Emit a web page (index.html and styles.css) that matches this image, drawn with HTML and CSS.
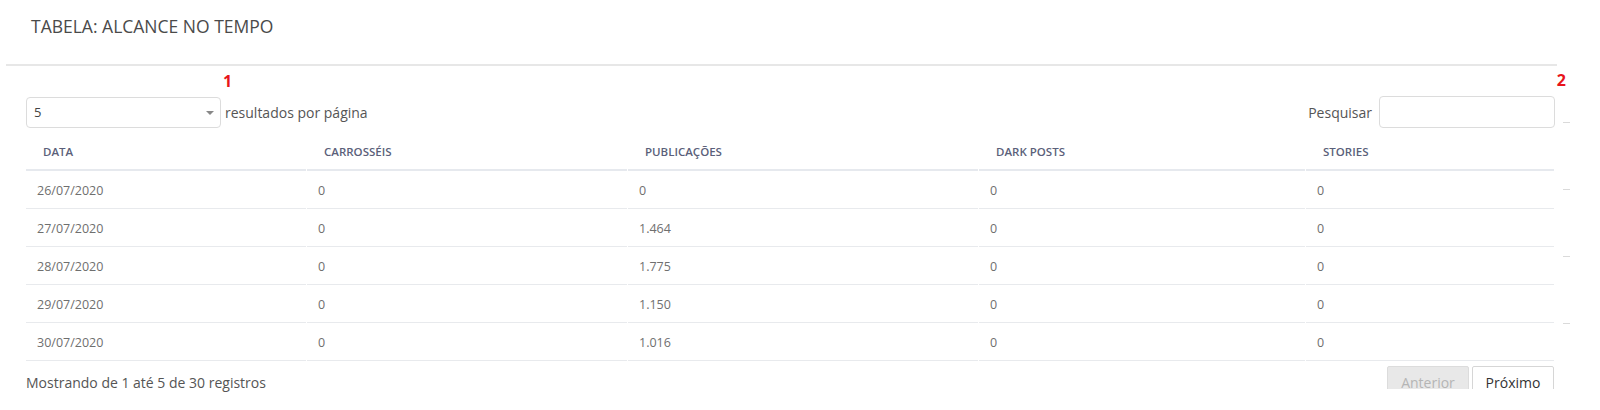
FILE: index.html
```html
<!DOCTYPE html>
<html lang="pt-BR">
<head>
<meta charset="utf-8">
<title>Tabela: Alcance no tempo</title>
<link rel="stylesheet" href="styles.css">
</head>
<body>
<div class="page">
  <div class="panel">
    <div class="panel-heading">
      <h2 class="panel-title">TABELA: ALCANCE NO TEMPO</h2>
    </div>
    <div class="panel-body">
      <div class="toolbar">
        <div class="length">
          <div class="select">
            <span class="select-value">5</span>
            <span class="caret"></span>
          </div>
          <span class="length-label">resultados por página</span>
          <span class="marker marker-1">1</span>
        </div>
        <div class="search">
          <label class="search-label">Pesquisar</label>
          <div class="search-input"></div>
          <span class="marker marker-2">2</span>
        </div>
      </div>
      <table class="data-table">
        <colgroup>
          <col class="c1"><col class="c2"><col class="c3"><col class="c4"><col class="c5">
        </colgroup>
        <thead>
          <tr><th>DATA</th><th>CARROSSÉIS</th><th>PUBLICAÇÕES</th><th>DARK POSTS</th><th>STORIES</th></tr>
        </thead>
        <tbody>
          <tr><td>26/07/2020</td><td>0</td><td>0</td><td>0</td><td>0</td></tr>
          <tr><td>27/07/2020</td><td>0</td><td>1.464</td><td>0</td><td>0</td></tr>
          <tr><td>28/07/2020</td><td>0</td><td>1.775</td><td>0</td><td>0</td></tr>
          <tr><td>29/07/2020</td><td>0</td><td>1.150</td><td>0</td><td>0</td></tr>
          <tr><td>30/07/2020</td><td>0</td><td>1.016</td><td>0</td><td>0</td></tr>
        </tbody>
      </table>
      <div class="footer">
        <div class="info">Mostrando de 1 até 5 de 30 registros</div>
        <div class="pager">
          <span class="btn btn-disabled">Anterior</span>
          <span class="btn">Próximo</span>
        </div>
      </div>
    </div>
  </div>
  <div class="side-ticks">
    <span class="tick"></span>
    <span class="tick"></span>
    <span class="tick"></span>
    <span class="tick"></span>
  </div>
</div>
</body>
</html>
```
FILE: styles.css
```css
* { box-sizing: border-box; }
html, body { margin: 0; padding: 0; background: #fff; }
body {
  font-family: "Open Sans", "Liberation Sans", sans-serif;
  color: #555;
  width: 1600px;
  height: 410px;
  overflow: hidden;
}
.page { display: flex; align-items: flex-start; }
.panel { width: 1557px; flex: none; }

.panel-heading {
  margin-left: 6px;
  height: 66px;
  border-bottom: 2px solid #e7e7e7;
  padding: 15px 0 0 25px;
}
.panel-title {
  margin: 0;
  font-size: 17.5px;
  font-weight: 400;
  line-height: 22px;
  color: #4a4a4a;
}

.panel-body {
  padding: 0 2px 0 26px;
}

.toolbar {
  display: flex;
  justify-content: space-between;
  align-items: center;
  padding-top: 30px;
  height: 62px;
}
.length, .search { display: flex; align-items: center; position: relative; }
.select {
  width: 195px;
  height: 31px;
  border: 1px solid #dcdcdc;
  border-radius: 4px;
  display: flex;
  align-items: center;
  justify-content: space-between;
  padding: 0 6px 0 7px;
  font-size: 13px;
  color: #444;
}
.caret {
  width: 0; height: 0;
  border-left: 4px solid transparent;
  border-right: 4px solid transparent;
  border-top: 4px solid #888;
  margin-top: 2px;
}
.length-label { font-size: 14px; margin-left: 4px; color: #555; }
.marker {
  position: absolute;
  top: -25px;
  color: #e8141b;
  font-weight: 700;
  font-size: 16px;
  line-height: 18px;
}
.marker-1 { left: 197px; }
.marker-2 { right: -11px; }
.search-label { font-size: 14px; color: #555; margin-right: 7px; }
.search-input {
  width: 176px;
  height: 32px;
  border: 1px solid #dcdcdc;
  border-radius: 4px;
}

.data-table {
  width: 1529px;
  margin-top: 5px;
  border-collapse: separate;
  border-spacing: 1px 0;
  margin-left: -1px;
  table-layout: fixed;
}
.c1 { width: 280px; }
.c2 { width: 320px; }
.c3 { width: 350px; }
.c4 { width: 326px; }
.c5 { width: 248px; }
.data-table th {
  height: 38px;
  text-align: left;
  font-size: 11.5px;
  font-weight: 600;
  color: #5b5f7a;
  padding: 0 0 0 17px;
  border-bottom: 2px solid #e6e9ee;
  vertical-align: middle;
}
.data-table td {
  height: 38px;
  font-size: 12.5px;
  color: #6f6f6f;
  padding: 2px 0 0 11px;
  border-bottom: 1px solid #e8eaed;
  vertical-align: middle;
}

.footer {
  display: flex;
  justify-content: space-between;
  align-items: flex-start;
  padding-top: 5px;
}
.info { font-size: 14px; line-height: 20px; padding-top: 7px; color: #555; }
.pager {
  display: flex;
  gap: 3px;
  margin-right: 1px;
  height: 23px;
  overflow: hidden;
}
.btn {
  flex: none;
  width: 82px;
  height: 38px;
  border: 1px solid #d6d6d6;
  border-radius: 2px;
  font-size: 14px;
  line-height: 32px;
  text-align: center;
  color: #333;
  background: #fff;
}
.btn-disabled { background: #e8e8e8; color: #b5b5b5; border-color: #dcdcdc; }

.side-ticks {
  display: flex;
  flex-direction: column;
  padding-top: 122px;
  gap: 66px;
  padding-left: 6px;
}
.tick { display: block; width: 7px; height: 1px; background: #dadada; }
```
